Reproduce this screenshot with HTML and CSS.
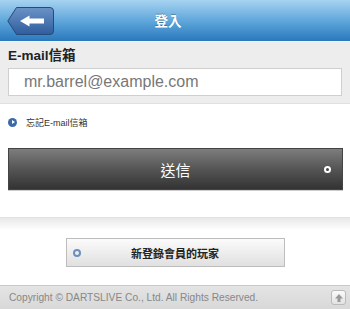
FILE: index.html
```html
<!DOCTYPE html>
<html>
<head>
<meta charset="utf-8">
<link rel="stylesheet" href="styles.css">
</head>
<body>
<header class="topbar">
  <a class="back" href="#">
    <svg width="47" height="28" viewBox="0 0 47 28">
      <defs>
        <linearGradient id="bg" x1="0" y1="0" x2="0" y2="1">
          <stop offset="0" stop-color="#6b93c8"/>
          <stop offset="1" stop-color="#2f5d9c"/>
        </linearGradient>
      </defs>
      <path d="M9.5,0.5 H43 Q46.5,0.5 46.5,4 V24 Q46.5,27.5 43,27.5 H9.5 L0.8,14 Z" fill="url(#bg)" stroke="#28497c"/>
      <path d="M13,14 L22.5,8.5 V11.5 H37 V16.5 H22.5 V19.5 Z" fill="#fff"/>
    </svg>
  </a>
  <h1 class="title">登入</h1>
</header>
<section class="formbox">
  <div class="label">E-mail信箱</div>
  <div class="input">mr.barrel@example.com</div>
</section>
<section class="actions">
  <a class="link" href="#"><span class="dot"></span>忘記E-mail信箱</a>
  <button class="send">送信<span class="ring"></span></button>
</section>
<div class="band"></div>
<section class="register">
  <button class="reg"><span class="ring2"></span>新登錄會員的玩家</button>
</section>
<footer class="foot">
  <span class="copy">Copyright © DARTSLIVE Co., Ltd. All Rights Reserved.</span>
  <a class="up" href="#">
    <svg width="10" height="10" viewBox="0 0 10 10"><path d="M5,1 L9,5.5 H6.5 V9 H3.5 V5.5 H1 Z" fill="#999"/></svg>
  </a>
</footer>
</body>
</html>
```

FILE: styles.css
```css
* { box-sizing: border-box; }
body {
  margin: 0;
  width: 350px;
  font-family: "Liberation Sans", "Noto Sans CJK TC", sans-serif;
  background: #fff;
}
.topbar {
  height: 42px;
  border-bottom: 1px solid #f2f2f2;
  background: linear-gradient(#a6d3f0, #5aa3d9 55%, #2a78bd);
  display: flex;
  align-items: center;
  position: relative;
  padding-left: 7px;
}
.back { display: block; height: 28px; }
.back svg { display: block; }
.title {
  position: absolute;
  left: 0; right: 14px; top: 0;
  margin: 0;
  text-align: center;
  line-height: 43px;
  font-size: 13.5px;
  font-weight: bold;
  color: #fff;
  text-shadow: 0 -1px 0 rgba(0,0,0,0.25);
}
.formbox {
  background: #ededed;
  padding: 5px 8px 7px;
  border-bottom: 1px solid #e0e0e0;
}
.label {
  font-size: 13.5px;
  font-weight: bold;
  color: #222;
  line-height: 18px;
  margin-bottom: 3px;
}
.input {
  height: 28px;
  background: #fff;
  border: 1px solid #cfcfcf;
  font-size: 16px;
  color: #777;
  line-height: 26px;
  padding-left: 15px;
}
.actions {
  padding: 8px 7px 27px 8px;
}
.link {
  display: flex;
  align-items: center;
  height: 20px;
  font-size: 9px;
  color: #333;
  text-decoration: none;
}
.dot {
  width: 9px; height: 9px;
  border-radius: 50%;
  background: #3c6aa8;
  position: relative;
  margin-right: 9px;
}
.dot::after {
  content: "";
  position: absolute;
  left: 3.5px; top: 2.5px;
  border-left: 3px solid #fff;
  border-top: 2px solid transparent;
  border-bottom: 2px solid transparent;
}
.send {
  display: block;
  position: relative;
  width: 335px;
  height: 42px;
  margin-top: 16px;
  border: 1px solid #444;
  background: linear-gradient(#7d7d7d, #555 50%, #333);
  color: #fff;
  font-family: "Liberation Sans", "Noto Sans CJK TC", sans-serif;
  font-size: 15px;
  padding: 0;
  box-shadow: 0 1px 0 #ccc;
}
.ring {
  position: absolute;
  right: 11px; top: 17px;
  width: 7px; height: 7px;
  border-radius: 50%;
  border: 2px solid #fff;
  background: #444;
}
.band {
  height: 13px;
  border-top: 1px solid #e2e2e2;
  background: linear-gradient(#e8e8e8, #fff);
}
.register {
  padding: 8px 0 18px;
  display: flex;
  justify-content: center;
}
.reg {
  position: relative;
  width: 219px;
  height: 29px;
  border: 1px solid #bdbdbd;
  background: linear-gradient(#fbfbfb, #e0e0e0);
  font-family: "Liberation Sans", "Noto Sans CJK TC", sans-serif;
  font-size: 11px;
  font-weight: bold;
  color: #222;
  padding: 0;
}
.ring2 {
  position: absolute;
  left: 6px; top: 10px;
  width: 8px; height: 8px;
  border-radius: 50%;
  border: 2.5px solid #6d8fb8;
  background: #e8eef6;
}
.foot {
  height: 24px;
  border-top: 1px solid #c9c9c9;
  background: linear-gradient(#e4e4e4, #d8d8d8);
  display: flex;
  align-items: center;
  justify-content: space-between;
  padding: 0 4px 0 9px;
}
.copy {
  font-size: 10.2px;
  color: #888;
}
.up {
  width: 15px; height: 15px;
  border: 1px solid #bbb;
  border-radius: 3px;
  background: linear-gradient(#fafafa, #e2e2e2);
  display: flex;
  align-items: center;
  justify-content: center;
}
.up svg { display: block; }
```
